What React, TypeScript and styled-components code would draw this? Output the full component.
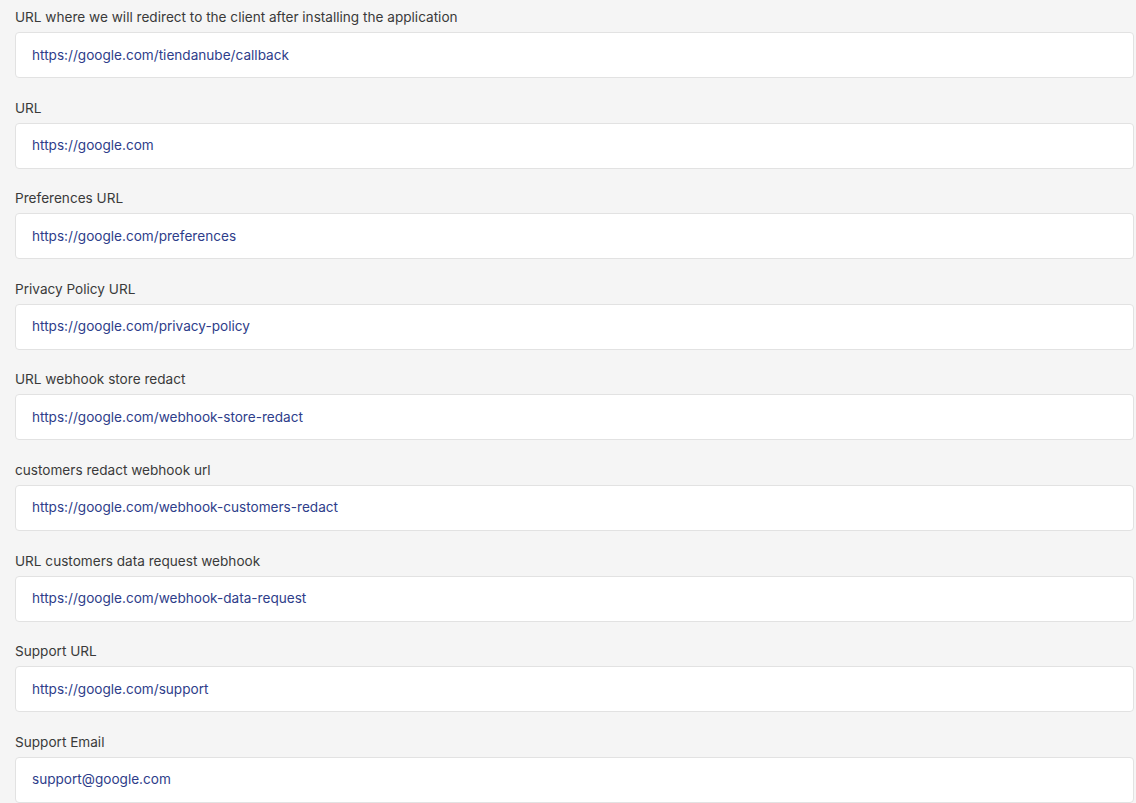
import React from "react";
import styled, { createGlobalStyle } from "styled-components";

const GlobalStyle = createGlobalStyle`
  html, body {
    margin: 0;
    padding: 0;
    background: #f5f5f5;
  }
  body {
    font-family: Inter, "Liberation Sans", sans-serif;
  }
`;

const Page = styled.div`
  display: flex;
  flex-direction: column;
  padding: 7px 2px 0 15px;
  background: #f5f5f5;
  min-height: 803px;
  box-sizing: border-box;
`;

const Field = styled.div`
  display: flex;
  flex-direction: column;
  gap: 5px;
  margin-bottom: 19.6px;
`;

const Label = styled.label`
  font-size: 13.6px;
  line-height: 20px;
  color: #3a3a3a;
`;

const Input = styled.input`
  box-sizing: border-box;
  height: 46px;
  width: 100%;
  padding: 0 16px 1px;
  border: 1px solid #e2e2e2;
  border-radius: 4px;
  background: #ffffff;
  font-family: Inter, "Liberation Sans", sans-serif;
  font-size: 13.6px;
  color: #2e3d8a;
  outline: none;
`;

const fields: { label: string; value: string }[] = [
  { label: "URL where we will redirect to the client after installing the application", value: "https://google.com/tiendanube/callback" },
  { label: "URL", value: "https://google.com" },
  { label: "Preferences URL", value: "https://google.com/preferences" },
  { label: "Privacy Policy URL", value: "https://google.com/privacy-policy" },
  { label: "URL webhook store redact", value: "https://google.com/webhook-store-redact" },
  { label: "customers redact webhook url", value: "https://google.com/webhook-customers-redact" },
  { label: "URL customers data request webhook", value: "https://google.com/webhook-data-request" },
  { label: "Support URL", value: "https://google.com/support" },
  { label: "Support Email", value: "support@google.com" },
];

export default function App() {
  return (
    <>
      <GlobalStyle />
      <Page>
        {fields.map((f, i) => (
          <Field key={i}>
            <Label htmlFor={`f${i}`}>{f.label}</Label>
            <Input id={`f${i}`} defaultValue={f.value} readOnly />
          </Field>
        ))}
      </Page>
    </>
  );
}
